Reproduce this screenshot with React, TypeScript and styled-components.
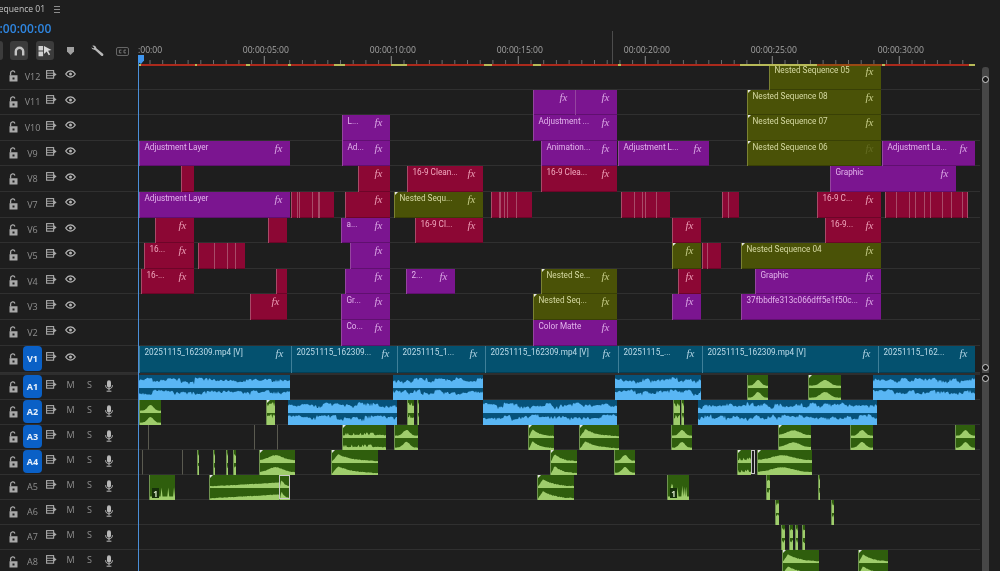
import React from 'react';
import styled, { createGlobalStyle } from 'styled-components';

const LANE_X = 138;
const RIGHT_EDGE = 980;

const GlobalStyle = createGlobalStyle`
  html, body {
    margin: 0;
    padding: 0;
    background: #1e1e1e;
    overflow: hidden;
  }
`;

const Page = styled.div`
  position: relative;
  width: 1000px;
  height: 571px;
  overflow: hidden;
  background: #1e1e1e;
  color: #a8a8a8;
  font-family: 'Open Sans', 'Liberation Sans', sans-serif;
  filter: blur(0.35px);
`;

const TitleBar = styled.div`
  display: flex;
  align-items: center;
  gap: 9px;
  height: 18px;
  margin-left: -6px;
  font-size: 8.6px;
  color: #c4c4c4;
`;

const MenuLines = styled.span`
  width: 6px;
  height: 5px;
  border-top: 1px solid #8c8c8c;
  border-bottom: 1px solid #8c8c8c;
  position: relative;

  &::after {
    content: '';
    position: absolute;
    left: 0;
    right: 0;
    top: 2px;
    height: 1px;
    background: #8c8c8c;
  }
`;

const Timecode = styled.div`
  height: 22px;
  margin-left: -14.5px;
  font-size: 12px;
  font-weight: 600;
  line-height: 22px;
  letter-spacing: 0.1px;
  color: #2f86e0;
`;

const TopRow = styled.div`
  display: flex;
  height: 24px;
`;

const Toolbar = styled.div`
  display: flex;
  align-items: flex-start;
  flex: 0 0 ${LANE_X}px;
  padding: 1px 0 0 10px;
  box-sizing: border-box;
  gap: 8px;
  position: relative;
`;

const ToolButton = styled.div<{ $active?: boolean }>`
  display: flex;
  align-items: center;
  justify-content: center;
  flex: 0 0 18px;
  height: 19px;
  border-radius: 3px;
  background: ${({ $active }) => ($active ? '#3c3c3c' : 'transparent')};
`;

const CutOffButton = styled.div`
  position: absolute;
  left: -4px;
  top: 1px;
  width: 7px;
  height: 19px;
  border-radius: 3px;
  background: #3c3c3c;
`;

const Ruler = styled.div`
  position: relative;
  flex: 0 0 ${975 - LANE_X}px;
`;

const RulerLabel = styled.span.attrs<{ $x: number }>(({ $x }) => ({
  style: { left: `${$x - LANE_X}px` },
}))<{ $x: number }>`
  position: absolute;
  top: 3px;
  font-size: 8.6px;
  line-height: 14px;
  color: #a4a4a4;
  white-space: nowrap;
`;

const TickSvg = styled.svg`
  position: absolute;
  left: 0;
  top: 15px;
`;

const RedBar = styled.div`
  position: absolute;
  left: 1px;
  right: 0;
  top: 24.3px;
  height: 2px;
  background: #ab2a1c;
  z-index: 3;
`;

const RenderSegment = styled.div.attrs<{ $x0: number; $x1: number }>(({ $x0, $x1 }) => ({
  style: { left: `${$x0 - LANE_X - 1}px`, width: `${$x1 - $x0}px` },
}))<{ $x0: number; $x1: number; $tone?: string }>`
  position: absolute;
  top: 0;
  bottom: 0;
  background: ${({ $tone }) => $tone ?? '#b8ba58'};
`;

const MarkerLine = styled.div`
  position: absolute;
  left: ${612 - LANE_X}px;
  top: -9px;
  width: 1px;
  height: 33px;
  background: #4c4c4c;
`;

const Section = styled.div`
  display: flex;
`;

const Rows = styled.div`
  flex: 0 0 ${RIGHT_EDGE}px;
`;

const ScrollColumn = styled.div`
  position: relative;
  flex: 0 0 20px;
`;

const ScrollTrack = styled.div<{ $top: number }>`
  position: absolute;
  left: 2px;
  width: 7px;
  top: ${({ $top }) => $top}px;
  bottom: 0;
  border-radius: 3px 3px 0 0;
  background: #474747;
`;

const ScrollKnob = styled.div<{ $top: number }>`
  position: absolute;
  left: 2px;
  top: ${({ $top }) => $top}px;
  width: 7px;
  height: 7px;
  box-sizing: border-box;
  border: 1.5px solid #d0d0d0;
  border-radius: 50%;
  background: #1a1a1a;
  z-index: 2;
`;

const Separator = styled.div`
  height: 2.4px;
  background: #2e2e2e;
  width: ${RIGHT_EDGE}px;
`;

const Track = styled.div<{ $height: number }>`
  display: flex;
  height: ${({ $height }) => $height}px;
  box-sizing: border-box;
  border-bottom: 1px solid #303030;
`;

const TrackHead = styled.div`
  display: grid;
  grid-template-columns: repeat(6, 19px);
  align-items: center;
  flex: 0 0 ${LANE_X}px;
  padding-left: 4px;
  box-sizing: border-box;
`;

const HeadCell = styled.div<{ $raise?: number }>`
  display: flex;
  align-items: center;
  justify-content: center;
  height: 100%;
  font-size: 9px;
  color: #8f8f8f;
  padding-bottom: ${({ $raise }) => $raise ?? 0}px;
  box-sizing: border-box;
`;

const TrackName = styled.div<{ $target?: boolean }>`
  display: flex;
  align-items: center;
  justify-content: center;
  align-self: stretch;
  margin: 0 0 1px 0;
  border-radius: 4px;
  font-size: 9px;
  padding-top: 1px;
  font-weight: ${({ $target }) => ($target ? 700 : 400)};
  color: ${({ $target }) => ($target ? '#e8f1fb' : '#8f8f8f')};
  background: ${({ $target }) => ($target ? '#0a60c6' : 'transparent')};
`;

const Lane = styled.div`
  position: relative;
  flex: 1;
`;

const palette: Record<string, { bg: string; text: string; edge: string; fx: string }> = {
  purple: { bg: '#7b1590', text: '#e3b4ec', edge: '#94459f', fx: '#d9a5e4' },
  crimson: { bg: '#8c0734', text: '#f2a9bf', edge: '#a84a68', fx: '#eb9db5' },
  olive: { bg: '#4a5207', text: '#d5d9a2', edge: '#7b8232', fx: '#c6cc88' },
  video: { bg: '#04516f', text: '#bcdbe9', edge: '#3f7f98', fx: '#b0d2e2' },
  audio: { bg: '#06527a', text: '#fff', edge: '#06527a', fx: '#fff' },
  green: { bg: '#2f5e0d', text: '#fff', edge: '#6f9350', fx: '#fff' },
  edge: { bg: '#5a5a50', text: '#fff', edge: '#5a5a50', fx: '#fff' },
  box: { bg: 'transparent', text: '#fff', edge: 'transparent', fx: '#fff' },
};

const ClipBox = styled.div.attrs<{ $x0: number; $x1: number }>(({ $x0, $x1 }) => ({
  style: { left: `${$x0 - LANE_X}px`, width: `${$x1 - $x0}px` },
}))<{ $x0: number; $x1: number; $kind: string }>`
  position: absolute;
  top: 0;
  bottom: -1px;
  box-sizing: border-box;
  overflow: hidden;
  background: ${({ $kind }) => palette[$kind].bg};
  box-shadow: inset 0 -1px rgba(0, 0, 0, 0.22);
  border-left: ${({ $kind }) => ($kind === 'edge' || $kind === 'audio' || $kind === 'box' ? '0' : '1px')} solid
    ${({ $kind }) => palette[$kind].edge};
`;

const SelectedBox = styled(ClipBox)`
  border: 1.5px solid #c8c8c8;
  box-shadow: none;
  bottom: 0;
  z-index: 1;
`;

const ClipLabel = styled.span<{ $kind: string }>`
  position: absolute;
  left: 4.5px;
  top: 0;
  font-family: 'Roboto', 'Open Sans', sans-serif;
  font-size: 8.2px;
  line-height: 13px;
  white-space: nowrap;
  color: ${({ $kind }) => palette[$kind].text};
`;

const FxMark = styled.span<{ $kind: string; $dim?: boolean }>`
  position: absolute;
  right: 7.5px;
  top: 0;
  font-family: 'Liberation Serif', serif;
  font-style: italic;
  font-size: 11px;
  line-height: 14px;
  color: ${({ $kind }) => palette[$kind].fx};
  opacity: ${({ $dim }) => ($dim ? 0.2 : 1)};
`;

const CutLine = styled.i.attrs<{ $x: number }>(({ $x }) => ({
  style: { left: `${$x}px` },
}))<{ $x: number; $kind: string }>`
  position: absolute;
  top: 0;
  bottom: 0;
  width: 1px;
  background: ${({ $kind }) => palette[$kind].edge};
`;

const CornerTick = styled.i`
  position: absolute;
  left: 0;
  top: 0;
  width: 0;
  height: 0;
  border-top: 3px solid #e6e6e6;
  border-right: 3px solid transparent;
  z-index: 2;
`;

const WaveSvg = styled.svg`
  position: absolute;
  left: 0;
  top: 0;
  width: 100%;
  height: 100%;
`;

const OneBadge = styled.span`
  position: absolute;
  left: 2px;
  bottom: 2px;
  width: 7px;
  height: 10px;
  font-size: 8px;
  font-weight: 700;
  line-height: 11px;
  text-align: center;
  color: #d8e8c8;
  background: #16300a;
  z-index: 1;
`;

const Playhead = styled.div`
  position: absolute;
  left: 138px;
  top: 60px;
  bottom: 0;
  width: 1px;
  background: #4a8fd8;
  z-index: 4;
`;

const PlayheadCap = styled.svg`
  position: absolute;
  left: 138px;
  top: 55px;
  z-index: 5;
`;

const grey = '#a9a9a9';

const LockIcon = () => (
  <svg width="9" height="12" viewBox="0 0 9 12">
    <path d="M1.6 5.5V3.2a2.2 2.2 0 0 1 4.3-.7" fill="none" stroke={grey} strokeWidth="1.3" />
    <path fillRule="evenodd" fill={grey} d="M.5 5.2h8v6.3h-8zM3.5 7.4v2h2v-2z" />
  </svg>
);

const OutputIcon = () => (
  <svg width="11" height="9" viewBox="0 0 11 9">
    <rect x="0.6" y="0.6" width="7" height="7.6" fill="none" stroke={grey} strokeWidth="1.1" />
    <path d="M.6 3.2h7M.6 5.6h7" stroke={grey} strokeWidth="0.9" />
    <path d="M8 2.2l2.6 2.2L8 6.6z" fill={grey} />
  </svg>
);

const EyeIcon = () => (
  <svg width="11" height="8" viewBox="0 0 11 8">
    <path d="M.7 4C2.2 1.7 3.8.8 5.5.8S8.8 1.7 10.3 4C8.8 6.3 7.2 7.2 5.5 7.2S2.2 6.3.7 4z" fill="none" stroke="#b4b4b4" strokeWidth="1.2" />
    <circle cx="5.5" cy="4" r="1.5" fill="#b4b4b4" />
  </svg>
);

const MicIcon = () => (
  <svg width="8" height="12" viewBox="0 0 8 12">
    <rect x="2" y="0.3" width="4" height="7.4" rx="2" fill="#b8b8b8" />
    <path d="M.6 5.2c0 2.4 1.4 3.6 3.4 3.6s3.4-1.2 3.4-3.6M4 8.8v1.8M1.6 11.2h4.8" fill="none" stroke="#b8b8b8" strokeWidth="1" />
  </svg>
);

const MagnetIcon = () => (
  <svg width="11" height="10" viewBox="0 0 11 10">
    <path d="M1.8 9.5V5.5a3.7 3.7 0 0 1 7.4 0v4" fill="none" stroke="#c4c4c4" strokeWidth="2.4" />
  </svg>
);

const LinkedIcon = () => (
  <svg width="14" height="12" viewBox="0 0 14 12">
    <path d="M.5 1h4.6v4.6H.5zM.5 6.6h4.6v4.6H.5z" fill="#d0d0d0" />
    <path d="M6 1l7.5 4-3.4.8 2 3.6-1.4.8-2-3.6L6 9z" fill="#d8d8d8" />
  </svg>
);

const MarkerIcon = () => (
  <svg width="7" height="8" viewBox="0 0 7 8">
    <path d="M0 0h7v4.6L3.5 8 0 4.6z" fill="#a0a0a0" />
  </svg>
);

const WrenchIcon = () => (
  <svg width="13" height="12" viewBox="0 0 13 12">
    <path
      d="M1.2.8A3 3 0 0 1 5.2 2.4l.2.9 6.6 5.5c1.1 1.1-.4 2.8-1.7 1.9L4 4.9l-.9-.1A3 3 0 0 1 .3 2.3l2 1.2 1-1.1z"
      fill="#b8b8b8"
    />
  </svg>
);

const CaptionIcon = () => (
  <svg width="13" height="9" viewBox="0 0 13 9">
    <rect x="0.5" y="0.5" width="12" height="8" rx="1.5" fill="none" stroke="#666" />
    <path d="M5.4 3.1H3.4v2.8h2M10 3.1H8v2.8h2" fill="none" stroke="#777" />
  </svg>
);

const Tool = styled.div<{ $at: number; $top?: number }>`
  position: absolute;
  left: ${({ $at }) => $at}px;
  top: ${({ $top }) => $top ?? 7}px;
  line-height: 0;
`;

type Profile = 'noise' | 'hill' | 'wide' | 'decay' | 'flat' | 'ramp' | 'dense' | 'spike';

// deterministic noise, keeps each waveform stable between renders
const rand = (n: number) => {
  const v = Math.sin(n * 127.1 + 311.7) * 43758.5453;
  return v - Math.floor(v);
};

const envelope = (p: Profile, t: number, i: number, seed: number) => {
  const r = rand(i + seed);
  const slow = rand(Math.floor(i / 7) + seed * 3);
  switch (p) {
    case 'noise':
      return 0.34 + slow * 0.4 + r * 0.2 - (r > 0.9 ? 0.3 : 0);
    case 'hill':
      return 0.1 + 0.52 * Math.exp(-(((t - 0.5) / 0.2) ** 2)) + r * 0.04;
    case 'wide':
      return 0.14 + 0.44 * Math.exp(-(((t - 0.45) / 0.28) ** 2)) + r * 0.05;
    case 'decay':
      return (t < 0.14 ? t / 0.14 : Math.exp(-(t - 0.14) * 3.2)) * 0.68 + r * 0.07;
    case 'flat':
      return 0.14 + r * 0.1 + (r > 0.85 ? 0.16 : 0);
    case 'ramp':
      return 0.04 + 0.34 * t + r * 0.05;
    case 'dense':
      return 0.5 + r * 0.4;
    case 'spike':
      return 0.06 + (r > 0.72 ? r * 0.6 : 0.05);
  }
};

const wavePath = (w: number, base: number, amp: number, p: Profile, seed: number) => {
  let d = `M0 ${base}`;
  const steps = Math.max(2, Math.round(w));
  for (let i = 0; i <= steps; i++) {
    const y = base - amp * Math.min(1, envelope(p, i / steps, i, seed));
    d += `L${i} ${y.toFixed(2)}`;
  }
  return `${d}L${steps} ${base}Z`;
};

const Wave = ({ w, h, profile, tone, seed, mono }: { w: number; h: number; profile: Profile; tone: string; seed: number; mono?: boolean }) => {
  const mid = h / 2;
  const bases = mono ? [h - 1] : [mid - 0.5, h - 1];
  const amp = mono ? h - 2 : mid - 1.5;
  return (
    <WaveSvg viewBox={`0 0 ${w} ${h}`} preserveAspectRatio="none">
      {bases.map((b, i) => (
        <g key={b}>
          <path d={wavePath(w, b, amp, profile, seed + i * 2)} fill={tone} />
          <rect x="0" y={b - 0.2} width={w} height="1.2" fill={tone} />
        </g>
      ))}
    </WaveSvg>
  );
};

interface Clip {
  kind: string;
  x0: number;
  x1: number;
  label?: string;
  fx?: boolean;
  dimFx?: boolean;
  cuts?: number[];
  tick?: boolean;
  wave?: Profile;
  mono?: boolean;
  badge?: boolean;
}

const v = (kind: string, x0: number, x1: number, label?: string, extra: Partial<Clip> = {}): Clip => ({
  kind,
  x0,
  x1,
  label,
  fx: true,
  ...extra,
});
const bare = (kind: string, x0: number, x1: number, cuts: number[] = []): Clip => ({ kind, x0, x1, cuts });
const blue = (x0: number, x1: number): Clip => ({ kind: 'audio', x0, x1, wave: 'noise' });
const gr = (x0: number, x1: number, wave: Profile = 'hill', extra: Partial<Clip> = {}): Clip => ({
  kind: 'green',
  x0,
  x1,
  wave,
  tick: x1 - x0 > 30,
  ...extra,
});
const line = (x: number): Clip => ({ kind: 'edge', x0: x, x1: x + 1 });
const sel = (x0: number, x1: number): Clip => ({ kind: 'box', x0, x1 });

const videoTracks: { name: string; clips: Clip[] }[] = [
  { name: 'V12', clips: [v('olive', 769, 881, 'Nested Sequence 05')] },
  {
    name: 'V11',
    clips: [v('purple', 533, 575), v('purple', 575, 617), v('olive', 747, 881, 'Nested Sequence 08', { tick: true })],
  },
  {
    name: 'V10',
    clips: [
      v('purple', 342, 390, 'L...'),
      v('purple', 533, 617, 'Adjustment ...'),
      v('olive', 747, 881, 'Nested Sequence 07', { tick: true }),
    ],
  },
  {
    name: 'V9',
    clips: [
      v('purple', 139, 290, 'Adjustment Layer'),
      v('purple', 342, 390, 'Ad...'),
      v('purple', 541, 617, 'Animation...'),
      v('purple', 618, 709, 'Adjustment L...'),
      v('olive', 747, 881, 'Nested Sequence 06', { tick: true, dimFx: true }),
      v('purple', 882, 975, 'Adjustment La...'),
    ],
  },
  {
    name: 'V8',
    clips: [
      bare('crimson', 181, 194),
      v('crimson', 358, 390),
      v('crimson', 407, 483, '16-9 Clean...'),
      v('crimson', 541, 617, '16-9 Clea...'),
      v('purple', 830, 956, 'Graphic'),
    ],
  },
  {
    name: 'V7',
    clips: [
      v('purple', 139, 290, 'Adjustment Layer'),
      bare('crimson', 291, 334, [5, 7, 20, 26, 27]),
      v('crimson', 345, 390),
      v('olive', 394, 483, 'Nested Sequ...', { tick: true }),
      bare('crimson', 491, 532, [7, 8, 12, 15, 24]),
      bare('crimson', 621, 670, [12, 20, 23, 34]),
      bare('crimson', 722, 739, [5]),
      v('crimson', 817, 881, '16-9 C...'),
      bare('crimson', 885, 968, [10, 23, 29, 38, 44, 56, 65, 76, 81]),
    ],
  },
  {
    name: 'V6',
    clips: [
      v('crimson', 155, 194),
      bare('crimson', 268, 287),
      v('purple', 341, 390, 'a...'),
      v('crimson', 415, 483, '16-9 Cl...'),
      v('crimson', 672, 701),
      v('crimson', 825, 881, '16-9...'),
    ],
  },
  {
    name: 'V5',
    clips: [
      v('crimson', 144, 194, '16...'),
      bare('crimson', 198, 245, [15, 28, 36]),
      v('purple', 350, 390),
      v('olive', 672, 701, undefined, { tick: true }),
      bare('crimson', 702, 721, [4]),
      v('olive', 741, 881, 'Nested Sequence 04', { tick: true }),
    ],
  },
  {
    name: 'V4',
    clips: [
      v('crimson', 141, 194, '16-...'),
      bare('crimson', 276, 287),
      v('purple', 345, 390),
      v('purple', 406, 455, '2...'),
      v('olive', 541, 617, 'Nested Se...', { tick: true }),
      v('crimson', 678, 701),
      v('purple', 755, 881, 'Graphic'),
    ],
  },
  {
    name: 'V3',
    clips: [
      v('crimson', 250, 287),
      v('purple', 341, 390, 'Gr...'),
      v('olive', 533, 617, 'Nested Seq...', { tick: true }),
      v('purple', 672, 701),
      v('purple', 741, 881, '37fbbdfe313c066dff5e1f50c...'),
    ],
  },
  { name: 'V2', clips: [v('purple', 341, 390, 'Co...'), v('purple', 533, 617, 'Color Matte')] },
];

const trackV1: Clip[] = [
  v('video', 139, 291, '20251115_162309.mp4 [V]'),
  v('video', 291, 397, '20251115_162309...'),
  v('video', 397, 485, '20251115_1...'),
  v('video', 485, 618, '20251115_162309.mp4 [V]'),
  v('video', 618, 702, '20251115_...'),
  v('video', 702, 878, '20251115_162309.mp4 [V]'),
  v('video', 878, 975, '20251115_162...'),
];

const audioTracks: { name: string; target?: boolean; clips: Clip[] }[] = [
  {
    name: 'A1',
    target: true,
    clips: [blue(139, 290), blue(393, 483), blue(615, 701), gr(747, 768), gr(808, 841), blue(873, 975)],
  },
  {
    name: 'A2',
    target: true,
    clips: [
      gr(139, 161),
      gr(266, 275, 'dense', { tick: true }),
      blue(288, 397),
      gr(407, 414, 'dense'),
      gr(417, 419, 'dense'),
      blue(483, 617),
      gr(673, 680, 'dense'),
      gr(681, 684, 'dense'),
      blue(698, 877),
    ],
  },
  {
    name: 'A3',
    target: true,
    clips: [
      line(148),
      line(254),
      line(277),
      gr(342, 386, 'flat'),
      gr(394, 418),
      gr(528, 554, 'decay', { tick: true }),
      gr(579, 619, 'decay', { tick: true }),
      gr(671, 692),
      gr(778, 811, 'wide'),
      gr(850, 873),
      gr(955, 975),
    ],
  },
  {
    name: 'A4',
    target: true,
    clips: [
      line(142),
      line(182),
      gr(197, 199, 'dense'),
      gr(213, 215, 'dense'),
      gr(226, 228, 'dense'),
      gr(233, 236, 'dense'),
      gr(259, 295, 'wide'),
      gr(331, 378, 'decay', { tick: true }),
      gr(550, 577, 'decay', { tick: true }),
      gr(614, 635),
      gr(737, 751, 'flat', { tick: true }),
      sel(751, 755),
      gr(757, 812, 'wide', { tick: true }),
    ],
  },
  {
    name: 'A5',
    clips: [
      gr(149, 175, 'spike', { mono: true, badge: true, tick: false }),
      gr(209, 279, 'ramp', { tick: true }),
      gr(279, 290, 'decay'),
      sel(279, 290),
      gr(537, 574, 'decay', { tick: true }),
      gr(667, 689, 'spike', { mono: true, badge: true, tick: false }),
      gr(766, 770, 'dense'),
      gr(818, 820, 'dense'),
    ],
  },
  { name: 'A6', clips: [gr(775, 779, 'dense'), gr(831, 834, 'dense')] },
  { name: 'A7', clips: [gr(781, 785, 'dense'), gr(789, 793, 'dense'), gr(795, 798, 'dense'), gr(802, 805, 'dense')] },
  { name: 'A8', clips: [gr(782, 819, 'decay', { tick: true }), gr(858, 888, 'decay', { tick: true })] },
];

const majors = [264.3, 391.3, 518.3, 645.3, 772.3, 899.3];
const labels = ['00:00:05:00', '00:00:10:00', '00:00:15:00', '00:00:20:00', '00:00:25:00', '00:00:30:00'];

const renderSegments: [number, number, string?][] = [
  [139, 141],
  [195, 197],
  [246, 250],
  [288, 291],
  [334, 345],
  [391, 407],
  [484, 492],
  [533, 541],
  [618, 621],
  [740, 817],
  [817, 881, '#9a4a14'],
  [882, 885],
  [969, 975],
];

const RulerTicks = () => {
  const ticks: React.ReactNode[] = [];
  for (let i = 1; i < 66; i++) {
    const x = 137.3 + i * 12.7 - LANE_X;
    const major = i % 10 === 0;
    ticks.push(<line key={i} x1={x} x2={x} y1={major ? 1 : 5} y2={9} stroke={major ? '#8a8a8a' : '#6c6c6c'} strokeWidth="1" />);
  }
  return (
    <TickSvg width={975 - LANE_X} height="10">
      {ticks}
    </TickSvg>
  );
};

const ClipView = ({ clip, height, seed }: { clip: Clip; height: number; seed: number }) => {
  const { kind, x0, x1 } = clip;
  if (kind === 'box') return <SelectedBox $x0={x0} $x1={x1} $kind={kind} />;
  return (
    <ClipBox $x0={x0} $x1={x1} $kind={kind}>
      {clip.wave && (
        <Wave
          w={x1 - x0}
          h={height}
          profile={clip.wave}
          tone={kind === 'audio' ? '#59b6f4' : '#9fcd6c'}
          seed={seed}
          mono={clip.mono}
        />
      )}
      {clip.badge && <OneBadge>1</OneBadge>}
      {clip.tick && <CornerTick />}
      {clip.label && <ClipLabel $kind={kind}>{clip.label}</ClipLabel>}
      {clip.fx && (
        <FxMark $kind={kind} $dim={clip.dimFx}>
          fx
        </FxMark>
      )}
      {clip.cuts?.map((c) => <CutLine key={c} $x={c} $kind={kind} />)}
    </ClipBox>
  );
};

const App: React.FC = () => {
  return (
    <Page>
      <GlobalStyle />
      <TitleBar>
        <span>Sequence 01</span>
        <MenuLines />
      </TitleBar>
      <Timecode>00:00:00:00</Timecode>
      <TopRow>
        <Toolbar>
          <CutOffButton />
          <ToolButton $active>
            <MagnetIcon />
          </ToolButton>
          <ToolButton $active>
            <LinkedIcon />
          </ToolButton>
          <Tool $at={67}>
            <MarkerIcon />
          </Tool>
          <Tool $at={91} $top={5}>
            <WrenchIcon />
          </Tool>
          <Tool $at={116}>
            <CaptionIcon />
          </Tool>
        </Toolbar>
        <Ruler>
          <RulerLabel $x={138}>:00:00</RulerLabel>
          {labels.map((l, i) => (
            <RulerLabel key={l} $x={majors[i] - 21.5}>
              {l}
            </RulerLabel>
          ))}
          <MarkerLine />
          <RulerTicks />
          <RedBar>
            {renderSegments.map(([a, b, tone]) => (
              <RenderSegment key={a} $x0={a} $x1={b} $tone={tone} />
            ))}
          </RedBar>
        </Ruler>
      </TopRow>
      <Section>
        <Rows>
          {videoTracks.map((t, i) => (
            <Track key={t.name} $height={25.6}>
              <TrackHead>
                <HeadCell>
                  <LockIcon />
                </HeadCell>
                <TrackName>{t.name}</TrackName>
                <HeadCell $raise={4}>
                  <OutputIcon />
                </HeadCell>
                <HeadCell $raise={4}>
                  <EyeIcon />
                </HeadCell>
              </TrackHead>
              <Lane>
                {t.clips.map((c) => (
                  <ClipView key={`${c.x0}-${i}`} clip={c} height={24} seed={c.x0} />
                ))}
              </Lane>
            </Track>
          ))}
          <Track $height={27}>
            <TrackHead>
              <HeadCell>
                <LockIcon />
              </HeadCell>
              <TrackName $target>V1</TrackName>
              <HeadCell $raise={4}>
                <OutputIcon />
              </HeadCell>
              <HeadCell $raise={4}>
                <EyeIcon />
              </HeadCell>
            </TrackHead>
            <Lane>
              {trackV1.map((c) => (
                <ClipView key={c.x0} clip={c} height={26} seed={c.x0} />
              ))}
            </Lane>
          </Track>
        </Rows>
        <ScrollColumn>
          <ScrollTrack $top={3} />
          <ScrollKnob $top={12} />
          <ScrollKnob $top={300} />
        </ScrollColumn>
      </Section>
      <Separator />
      <Section>
        <Rows>
          {audioTracks.map((t) => (
            <Track key={t.name} $height={25}>
              <TrackHead>
                <HeadCell>
                  <LockIcon />
                </HeadCell>
                <TrackName $target={t.target}>{t.name}</TrackName>
                <HeadCell $raise={4}>
                  <OutputIcon />
                </HeadCell>
                <HeadCell $raise={4}>M</HeadCell>
                <HeadCell $raise={4}>S</HeadCell>
                <HeadCell $raise={2}>
                  <MicIcon />
                </HeadCell>
              </TrackHead>
              <Lane>
                {t.clips.map((c) => (
                  <ClipView key={`${c.x0}-${c.kind}`} clip={c} height={24} seed={c.x0} />
                ))}
              </Lane>
            </Track>
          ))}
        </Rows>
        <ScrollColumn>
          <ScrollTrack $top={0} />
          <ScrollKnob $top={0} />
        </ScrollColumn>
      </Section>
      <Playhead />
      <PlayheadCap width="6" height="9" viewBox="0 0 6 9">
        <path d="M0 0h6v5.5L3 9 0 7z" fill="#3f95ee" />
      </PlayheadCap>
    </Page>
  );
};

export default App;
